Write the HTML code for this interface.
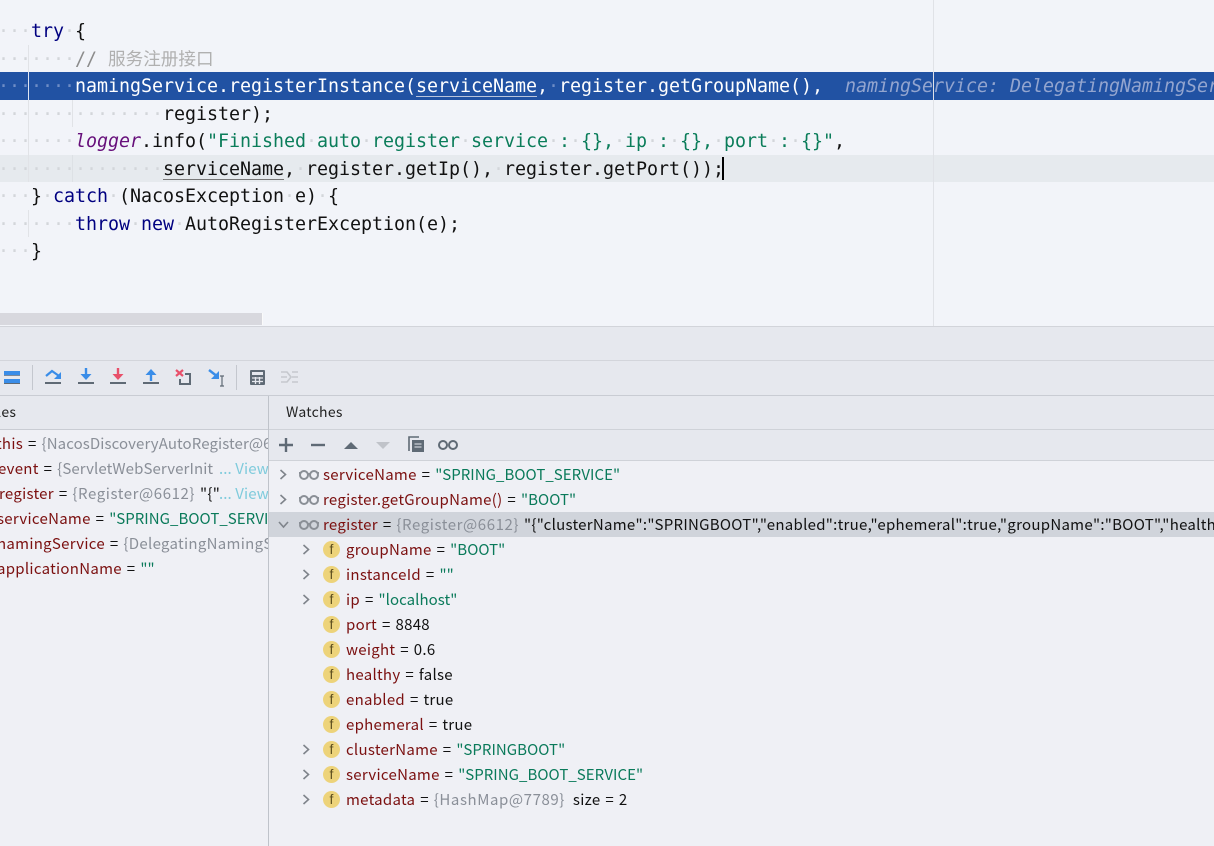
<!DOCTYPE html>
<html><head><meta charset="utf-8"><style>
html,body{margin:0;padding:0;width:1214px;height:846px;overflow:hidden;background:#f2f4f9}
.a{position:absolute}
#c{position:absolute;left:0;top:0;width:1214px;height:326px;overflow:hidden;background:#f2f4f9}
.l{position:absolute;left:-2px;height:27.5px;font:18.33px/27.5px "DejaVu Sans Mono","Liberation Mono",monospace;white-space:pre;color:#111;letter-spacing:-.035px;margin-top:1px}
.d{color:#d3d6da}.k{color:#000080}.s{color:#0b7d5a}.u{text-decoration:underline;text-underline-offset:4px;text-decoration-color:#777;text-decoration-thickness:1px}
.t{position:absolute;font:15px/25px "Noto Sans CJK SC","Liberation Sans",sans-serif;white-space:pre;color:#111;height:25px;letter-spacing:.28px;word-spacing:1.3px}
.v{color:#7b1010}.g{color:#8a8f98;letter-spacing:.58px}.q{color:#0a7a5a;letter-spacing:.05px}.b{color:#7fcbdc;word-spacing:0;letter-spacing:.1px}
.f{position:absolute;left:323px;width:17px;height:17px;border-radius:50%;background:#edd37a;color:#5f5020;font:14px/17px "Liberation Sans",sans-serif;text-align:center}
</style></head><body>
<div id="c">
<div class="a" style="left:0;top:72px;width:1214px;height:28px;background:#2152a3"></div>
<div class="a" style="left:0;top:155px;width:1214px;height:27px;background:#e6eaee"></div>
<div class="a" style="left:933px;top:0;width:1px;height:326px;background:#e0e2e7"></div>
<div class="a" style="left:28px;top:45px;width:1px;height:137px;background:#e1e3e7"></div>
<div class="a" style="left:28px;top:72px;width:1px;height:28px;background:#dfe5f2"></div>
<div class="a" style="left:28px;top:210px;width:1px;height:27px;background:#e1e3e7"></div>
<div class="a" style="left:72px;top:100px;width:1px;height:27px;background:#e1e3e7"></div>
<div class="a" style="left:72px;top:155px;width:1px;height:27px;background:#dde1e5"></div>
<div class="l" style="top:17px"><span class="d">···</span><span class="k">try</span><span class="d">·</span>{</div>
<div class="l" style="top:45px"><span class="d">·······</span><span style="color:#8c8c8c">//</span></div>
<div class="a" style="left:108px;top:45px;font:17.6px/27.5px 'Noto Sans CJK SC',sans-serif;color:#b0b0b0;white-space:pre">服务注册接口</div>
<div class="l" style="top:72px;color:#fff"><span style="color:#6f8dc6">·······</span>namingService.registerInstance(<span class="u" style="text-decoration-color:#b8c4dc">serviceName</span>,<span style="color:#6f8dc6">·</span>register.getGroupName(),  <i style="color:#93a5cf">namingService: DelegatingNamingService</i></div>
<div class="l" style="top:100px"><span class="d">···············</span>register);</div>
<div class="l" style="top:127px"><span class="d">·······</span><i style="color:#660e7a">logger</i>.info(<span class="s">"Finished<span class="d">·</span>auto<span class="d">·</span>register<span class="d">·</span>service<span class="d">·</span>:<span class="d">·</span>{},<span class="d">·</span>ip<span class="d">·</span>:<span class="d">·</span>{},<span class="d">·</span>port<span class="d">·</span>:<span class="d">·</span>{}"</span>,</div>
<div class="l" style="top:155px"><span class="d">···············</span><span class="u">serviceName</span>,<span class="d">·</span>register.getIp(),<span class="d">·</span>register.getPort());</div>
<div class="a" style="left:722px;top:157px;width:2px;height:23px;background:#000"></div>
<div class="l" style="top:182px"><span class="d">···</span>}<span class="d">·</span><span class="k">catch</span><span class="d">·</span>(NacosException<span class="d">·</span>e)<span class="d">·</span>{</div>
<div class="l" style="top:210px"><span class="d">·······</span><span class="k">throw</span><span class="d">·</span><span class="k">new</span><span class="d">·</span>AutoRegisterException(e);</div>
<div class="l" style="top:237px"><span class="d">···</span>}</div>
<div class="a" style="left:0;top:313px;width:262px;height:12px;background:#d8d8de;border-right:1px solid #fafafa"></div>
</div>

<div class="a" style="left:0;top:326px;width:1214px;height:70px;background:#e6e8ee;border-top:1px solid #d2d4da;box-sizing:border-box"></div>
<div class="a" style="left:0;top:360px;width:1214px;height:1px;background:#d3d5db"></div>
<div class="a" style="left:0;top:395px;width:1214px;height:1px;background:#c9ccd3"></div>
<div class="a" style="left:0;top:396px;width:1214px;height:34px;background:#e6e8ee"></div>
<div class="a" style="left:0;top:429px;width:268px;height:1px;background:#c9ccd3"></div>
<div class="a" style="left:0;top:430px;width:268px;height:416px;background:#eff0f5"></div>
<div class="a" style="left:269px;top:396px;width:945px;height:64px;background:#e6e8ee"></div>
<div class="a" style="left:269px;top:429px;width:945px;height:1px;background:#cfd2d8"></div>
<div class="a" style="left:269px;top:460px;width:945px;height:1px;background:#cfd2d8"></div>
<div class="a" style="left:269px;top:461px;width:945px;height:385px;background:#eff0f5"></div>
<div class="a" style="left:268px;top:396px;width:1px;height:450px;background:#bfc3ca"></div>
<div class="a" style="left:269px;top:512px;width:945px;height:25px;background:#d0d4db"></div>

<svg class="a" style="left:0;top:0" width="1214" height="846" viewBox="0 0 1214 846">
<g fill="none">
<rect x="4" y="371" width="16" height="4" fill="#3a8de8"/><rect x="4" y="375" width="16" height="1" fill="#7d8a9a"/><rect x="4" y="379" width="16" height="4" fill="#3a8de8"/><rect x="4" y="383" width="16" height="1" fill="#5f6a75"/>
<rect x="32" y="365" width="1" height="25" fill="#c4c7ce"/><rect x="236" y="365" width="1" height="25" fill="#c4c7ce"/>
<path d="M46 376l6-5 7 5" stroke="#3a8de8" stroke-width="2.2"/><path d="M61 372v7h-7z" fill="#3a8de8"/><rect x="45" y="382" width="16" height="2" fill="#5f6a75"/>
<path d="M86 368v9" stroke="#3a8de8" stroke-width="2.4"/><path d="M80.500 374h11l-5.500 6z" fill="#3a8de8"/><rect x="78" y="382" width="16" height="2" fill="#5f6a75"/>
<path d="M118 368v9" stroke="#e8506a" stroke-width="2.4"/><path d="M112.500 374h11l-5.500 6z" fill="#e8506a"/><rect x="110" y="382" width="16" height="2" fill="#5f6a75"/>
<path d="M151 372v9" stroke="#3a8de8" stroke-width="2.400"/><path d="M145.500 375h11l-5.500-6z" fill="#3a8de8"/><rect x="143" y="382" width="16" height="2" fill="#5f6a75"/>
<path d="M176 370l7 6M183 370l-7 6" stroke="#e8506a" stroke-width="2.200"/><path d="M185 374h5v10h-10v-5" stroke="#5f6a75" stroke-width="2"/>
<path d="M209 370l9 7" stroke="#3a8de8" stroke-width="2.400"/><path d="M219 371v8h-8z" fill="#3a8de8"/><path d="M220 376h4M222 376v10M220 386h4" stroke="#5f6a75" stroke-width="1.200"/>
<rect x="250" y="370" width="15" height="15" rx="1" fill="#5f6a75"/><rect x="252" y="372" width="11" height="3" fill="#e6e8ee"/><path d="M252 378h11M252 381.500h11M255.500 377v7M259.500 377v7" stroke="#e6e8ee" stroke-width="1.300"/>
<path d="M281 372h6l4 5-4 5h-6M281 377h6M292 372h6M292 377h6M292 382h6" stroke="#c5c8cd" stroke-width="1.600"/>
<path d="M279 445h14M286 438v14" stroke="#5f6a75" stroke-width="2.400"/>
<path d="M311 445h14" stroke="#5f6a75" stroke-width="2.400"/>
<path d="M344 449l7-7 7 7z" fill="#5f6a75"/><path d="M376 442h14l-7 7z" fill="#c0c3c9"/>
<path d="M409 451v-14h10" stroke="#5f6a75" stroke-width="1.600"/><rect x="412" y="440" width="12" height="12" fill="#5f6a75"/><path d="M414.500 444h7M414.500 447h7" stroke="#e6e8ee"/>
<g stroke="#5f6a75" stroke-width="2"><circle cx="443" cy="445" r="4"/><circle cx="453" cy="445" r="4"/></g>
<g stroke="#8a8f96" stroke-width="2">
<circle cx="304" cy="475" r="4"/><circle cx="314" cy="475" r="4"/><path d="M299 473h2M317 473h2M308 474h2"/>
<circle cx="304" cy="500" r="4"/><circle cx="314" cy="500" r="4"/><path d="M299 498h2M317 498h2M308 499h2"/>
<circle cx="304" cy="525" r="4"/><circle cx="314" cy="525" r="4"/><path d="M299 523h2M317 523h2M308 524h2"/>
</g>
<g stroke="#7f848b" stroke-width="1.600">
<path d="M280.500 470l5 4.500-5 4.500M280.500 495l5 4.500-5 4.500"/><path d="M279 522l4.500 5 4.500-5"/>
<path d="M303.500 545l5 4.500-5 4.500M303.500 570l5 4.500-5 4.500M303.500 595l5 4.500-5 4.500M303.500 745l5 4.500-5 4.500M303.500 770l5 4.500-5 4.500M303.500 795l5 4.500-5 4.500"/>
</g>
</g></svg>

<div class="t" style="left:-46px;top:400px;font-size:14px;color:#222">Variables</div>
<div class="t" style="left:286px;top:400px;font-size:14px;color:#222">Watches</div>

<div class="a" style="left:0;top:430px;width:268px;height:170px;overflow:hidden">
<div class="t" style="left:-4px;top:1px"><span class="v">this</span> = <span class="g" style="letter-spacing:.1px">{NacosDiscoveryAutoRegister@6611}</span></div>
<div class="t" style="left:-2px;top:26px"><span class="v">event</span> = <span class="g" style="letter-spacing:.1px">{ServletWebServerInit</span></div>
<div class="t" style="left:219px;top:26px"><span class="b">... View</span></div>
<div class="t" style="left:-1px;top:51px"><span class="v">register</span> = <span class="g">{Register@6612}</span> "{"</div>
<div class="t" style="left:219px;top:51px"><span class="b">... View</span></div>
<div class="t" style="left:-3px;top:76px"><span class="v">serviceName</span> = <span class="q">"SPRING_BOOT_SERVICE"</span></div>
<div class="t" style="left:-3px;top:101px"><span class="v">namingService</span> = <span class="g" style="letter-spacing:.3px">{DelegatingNamingService@6613}</span></div>
<div class="t" style="left:-3px;top:126px"><span class="v">applicationName</span> = <span class="q">""</span></div>
</div>

<div class="t" style="left:323px;top:462px"><span class="v">serviceName</span> = <span class="q">"SPRING_BOOT_SERVICE"</span></div>
<div class="t" style="left:323px;top:487px"><span class="v">register.getGroupName()</span> = <span class="q">"BOOT"</span></div>
<div class="a" style="left:323px;top:512px;width:891px;height:25px;overflow:hidden"><div class="t" style="left:0;top:0"><span class="v">register</span> = <span class="g">{Register@6612}</span> "{"clusterName":"SPRINGBOOT","enabled":true,"ephemeral":true,"groupName":"BOOT","healthy":false}"</div></div>

<div class="f" style="top:541px">f</div><div class="t" style="left:346px;top:537px"><span class="v">groupName</span> = <span class="q">"BOOT"</span></div>
<div class="f" style="top:566px">f</div><div class="t" style="left:346px;top:562px"><span class="v">instanceId</span> = <span class="q">""</span></div>
<div class="f" style="top:591px">f</div><div class="t" style="left:346px;top:587px"><span class="v">ip</span> = <span class="q">"localhost"</span></div>
<div class="f" style="top:616px">f</div><div class="t" style="left:346px;top:612px"><span class="v">port</span> = 8848</div>
<div class="f" style="top:641px">f</div><div class="t" style="left:346px;top:637px"><span class="v">weight</span> = 0.6</div>
<div class="f" style="top:666px">f</div><div class="t" style="left:346px;top:662px"><span class="v">healthy</span> = false</div>
<div class="f" style="top:691px">f</div><div class="t" style="left:346px;top:687px"><span class="v">enabled</span> = true</div>
<div class="f" style="top:716px">f</div><div class="t" style="left:346px;top:712px"><span class="v">ephemeral</span> = true</div>
<div class="f" style="top:741px">f</div><div class="t" style="left:346px;top:737px"><span class="v">clusterName</span> = <span class="q">"SPRINGBOOT"</span></div>
<div class="f" style="top:766px">f</div><div class="t" style="left:346px;top:762px"><span class="v">serviceName</span> = <span class="q">"SPRING_BOOT_SERVICE"</span></div>
<div class="f" style="top:791px">f</div><div class="t" style="left:346px;top:787px"><span class="v">metadata</span> = <span class="g">{HashMap@7789}</span> <span style="margin-left:3px">size = 2</span></div>
</body></html>
